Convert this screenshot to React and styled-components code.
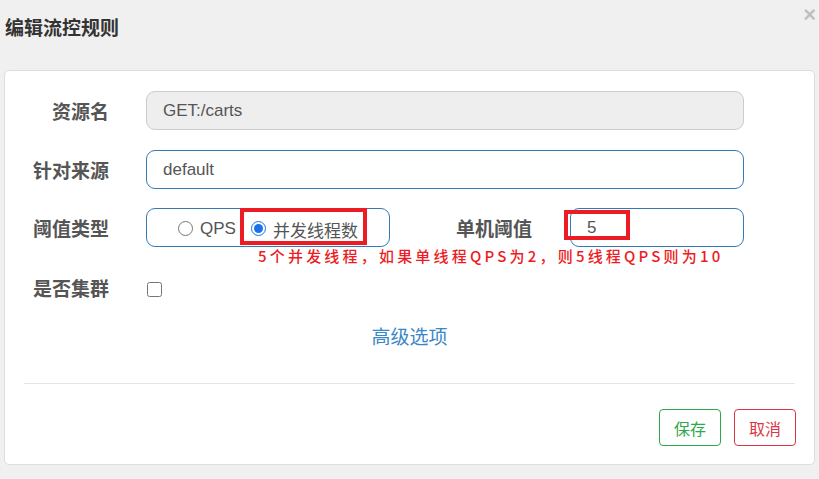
import React, { useState } from 'react';
import styled, { createGlobalStyle } from 'styled-components';

const GlobalStyle = createGlobalStyle`
  html, body {
    margin: 0;
    padding: 0;
    background: #f0f0f0;
    font-family: "Liberation Sans", "Noto Sans CJK SC", sans-serif;
  }
`;

const Page = styled.div`
  width: 819px;
  height: 479px;
  padding: 0 4px;
  box-sizing: border-box;
  overflow: hidden;
`;

const Header = styled.div`
  height: 70px;
  display: flex;
  justify-content: space-between;
  align-items: flex-start;
`;

const Title = styled.h4`
  margin: 18px 0 0 1px;
  font-size: 19px;
  line-height: 22px;
  font-weight: bold;
  color: #333;
`;

const Close = styled.span`
  margin: 0 -1px 0 0;
  font-size: 22px;
  line-height: 30px;
  font-weight: bold;
  color: #000;
  opacity: 0.2;
  font-family: "Liberation Sans", sans-serif;
`;

const Card = styled.div`
  height: 395px;
  box-sizing: border-box;
  background: #fff;
  border: 1px solid #ddd;
  border-radius: 5px;
  padding-top: 20px;
`;

const Form = styled.form`
  display: flex;
  flex-direction: column;
  gap: 19px;
  padding-right: 70px;
`;

const Row = styled.div`
  position: relative;
  display: grid;
  grid-template-columns: 104px 1fr;
  column-gap: 37px;
  align-items: center;
  min-height: 39px;
  margin-top: ${p => p.$shift || 0}px;
`;

const Label = styled.label`
  text-align: right;
  font-size: 19px;
  font-weight: bold;
  color: #555;
  font-family: "Noto Sans CJK SC", sans-serif;
`;

const Input = styled.input`
  height: 39px;
  width: ${p => (p.$w ? p.$w + 'px' : '100%')};
  box-sizing: border-box;
  padding: 0 16px;
  font-size: 17px;
  font-family: "Liberation Sans", "Noto Sans CJK SC", sans-serif;
  color: #555;
  background: ${p => (p.disabled ? '#eee' : '#fff')};
  border: 1px solid ${p => (p.disabled ? '#ccc' : '#337ab7')};
  border-radius: 9px;
  outline: none;
`;

const Inline = styled.div`
  display: flex;
  align-items: center;
`;

const RadioBox = styled.div`
  width: 244px;
  height: 39px;
  box-sizing: border-box;
  border: 1px solid #337ab7;
  border-radius: 9px;
  display: flex;
  align-items: center;
  justify-content: center;
  gap: 15px;
`;

const RadioItem = styled.label`
  display: flex;
  align-items: center;
  gap: 7px;
  font-size: 17px;
  color: #555;
  font-family: "Liberation Sans", "Noto Sans CJK SC", sans-serif;
  padding-top: 3px;
`;

const Radio = styled.input`
  width: 15px;
  height: 15px;
  margin: 0 0 2px 0;
  accent-color: #1a73e8;
`;

const SubLabel = styled(Label)`
  flex: 1;
  margin-right: 38px;
`;

const Check = styled.input`
  width: 15px;
  height: 15px;
  margin: 7px 0 0 1px;
`;

const Mark = styled.div`
  position: absolute;
  border: 4px solid #ec1c24;
  box-sizing: border-box;
  pointer-events: none;
`;

const Note = styled.div`
  position: absolute;
  left: 253px;
  top: 39px;
  font-size: 15px;
  line-height: 18px;
  letter-spacing: 3.2px;
  font-weight: 500;
  color: #ec1c24;
  white-space: nowrap;
  font-family: "Noto Sans CJK SC", sans-serif;
`;

const More = styled.a`
  display: block;
  text-align: center;
  margin-top: 16px;
  font-size: 19px;
  line-height: 26px;
  color: #3a87c8;
  font-family: "Noto Sans CJK SC", sans-serif;
  text-decoration: none;
`;

const Divider = styled.hr`
  margin: 34px 19px 0 19px;
  border: 0;
  border-top: 1px solid #e5e5e5;
`;

const Footer = styled.div`
  display: flex;
  justify-content: flex-end;
  gap: 13px;
  padding: 25px 18px 0 0;
`;

const Button = styled.button`
  width: 62px;
  height: 37px;
  background: #fff;
  border: 1px solid ${p => p.$color};
  color: ${p => p.$color};
  border-radius: 4px;
  font-size: 16px;
  font-family: "Noto Sans CJK SC", sans-serif;
  padding: 0;
`;

export default function App() {
  const [grade, setGrade] = useState('thread');
  const [count, setCount] = useState('5');
  const [cluster, setCluster] = useState(false);

  return (
    <Page>
      <GlobalStyle />
      <Header>
        <Title>编辑流控规则</Title>
        <Close>×</Close>
      </Header>
      <Card>
        <Form onSubmit={e => e.preventDefault()}>
          <Row>
            <Label>资源名</Label>
            <Input disabled value="GET:/carts" readOnly />
          </Row>
          <Row $shift={1}>
            <Label>针对来源</Label>
            <Input defaultValue="default" />
          </Row>
          <Row>
            <Label>阈值类型</Label>
            <Inline>
              <RadioBox>
                <RadioItem>
                  <Radio
                    type="radio"
                    name="grade"
                    checked={grade === 'qps'}
                    onChange={() => setGrade('qps')}
                  />
                  QPS
                </RadioItem>
                <RadioItem>
                  <Radio
                    type="radio"
                    name="grade"
                    checked={grade === 'thread'}
                    onChange={() => setGrade('thread')}
                  />
                  并发线程数
                </RadioItem>
              </RadioBox>
              <SubLabel>单机阈值</SubLabel>
              <Input $w={174} value={count} onChange={e => setCount(e.target.value)} />
            </Inline>
            <Mark style={{ left: 235, top: 0, width: 127, height: 37 }} />
            <Mark style={{ left: 559, top: 2, width: 66, height: 30 }} />
            <Note>5个并发线程，如果单线程QPS为2，则5线程QPS则为10</Note>
          </Row>
          <Row $shift={2}>
            <Label>是否集群</Label>
            <div>
              <Check type="checkbox" checked={cluster} onChange={e => setCluster(e.target.checked)} />
            </div>
          </Row>
        </Form>
        <More href="#">高级选项</More>
        <Divider />
        <Footer>
          <Button $color="#2ea84a">保存</Button>
          <Button $color="#dc3545">取消</Button>
        </Footer>
      </Card>
    </Page>
  );
}
